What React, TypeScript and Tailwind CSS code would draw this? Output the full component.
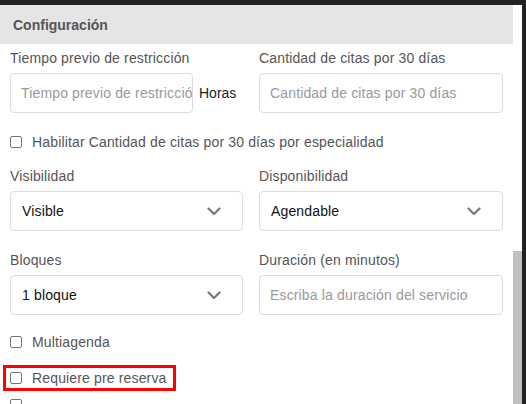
import type { ReactNode } from 'react';

const labelClass = 'block h-5 text-sm leading-5 tracking-[0.15px] text-[#555]';
const boxClass =
  'mt-[5px] flex h-10 items-center rounded-[4px] border border-[#dcdcdc] bg-white text-sm tracking-[0.15px]';

function Field({ label, children }: { label: string; children: ReactNode }) {
  return (
    <div className="flex min-w-0 flex-col">
      <span className={labelClass}>{label}</span>
      {children}
    </div>
  );
}

function TextBox({ placeholder, className = 'w-full' }: { placeholder: string; className?: string }) {
  return (
    <div className={`${boxClass} overflow-hidden whitespace-nowrap px-[10px] text-[#999] ${className}`}>
      {placeholder}
    </div>
  );
}

function Chevron() {
  return (
    <svg width="14" height="9" viewBox="0 0 14 9" fill="none" className="shrink-0">
      <path d="M1.5 1.5 7 7l5.5-5.5" stroke="#777" strokeWidth="2.2" strokeLinecap="round" strokeLinejoin="round" />
    </svg>
  );
}

function SelectBox({ value }: { value: string }) {
  return (
    <div className={`${boxClass} w-full justify-between pl-[11px] pr-[21px] text-[#111]`}>
      <span>{value}</span>
      <Chevron />
    </div>
  );
}

function Check({ label }: { label: string }) {
  return (
    <div className="flex h-5 items-center text-sm leading-5 tracking-[0.15px] text-[#555]">
      <span className="ml-[10px] h-[12px] w-[12px] rounded-[2px] border border-[#767676] bg-white" />
      <span className="ml-[10px] whitespace-nowrap">{label}</span>
    </div>
  );
}

export default function App() {
  return (
    <div
      className="h-[404px] w-[526px] overflow-hidden bg-[#222] pt-[5px]"
      style={{ fontFamily: '"Liberation Sans", Arial, sans-serif' }}
    >
      <div className="flex h-full w-[522px] bg-white">
        <div className="w-[513px] shrink-0">
          <div className="flex h-[39px] items-center bg-[#e5e5e5] pl-[13px] text-sm font-bold text-[#555]">
            Configuración
          </div>

          <div className="px-[10px] pt-[4px]">
            <div className="grid grid-cols-[233px_244px] gap-x-4">
              <Field label="Tiempo previo de restricción">
                <div className="flex items-center">
                  <TextBox placeholder="Tiempo previo de restricción" className="w-[183px] shrink-0" />
                  <span className="ml-[6px] mt-[5px] text-sm text-[#222]">Horas</span>
                </div>
              </Field>
              <Field label="Cantidad de citas por 30 días">
                <TextBox placeholder="Cantidad de citas por 30 días" />
              </Field>
            </div>
          </div>

          <div className="mt-[19px]">
            <Check label="Habilitar Cantidad de citas por 30 días por especialidad" />
          </div>

          <div className="mt-[14px] px-[10px]">
            <div className="grid grid-cols-[233px_244px] gap-x-4">
              <Field label="Visibilidad">
                <SelectBox value="Visible" />
              </Field>
              <Field label="Disponibilidad">
                <SelectBox value="Agendable" />
              </Field>
            </div>
          </div>

          <div className="mt-[19px] px-[10px]">
            <div className="grid grid-cols-[233px_244px] gap-x-4">
              <Field label="Bloques">
                <SelectBox value="1 bloque" />
              </Field>
              <Field label="Duración (en minutos)">
                <TextBox placeholder="Escriba la duración del servicio" />
              </Field>
            </div>
          </div>

          <div className="mt-[17px]">
            <Check label="Multiagenda" />
          </div>

          <div className="ml-[3px] mt-[13px] flex h-[26px] w-[173px] items-center border-[3px] border-[#ff0000]">
            <div className="-ml-[6px]">
              <Check label="Requiere pre reserva" />
            </div>
          </div>

          <div className="mt-[4px]">
            <Check label="" />
          </div>
        </div>

        <div className="flex w-[9px] shrink-0 flex-col">
          <div className="mt-[246px] flex-1 bg-[#c1c1c1]" />
        </div>
      </div>
    </div>
  );
}
